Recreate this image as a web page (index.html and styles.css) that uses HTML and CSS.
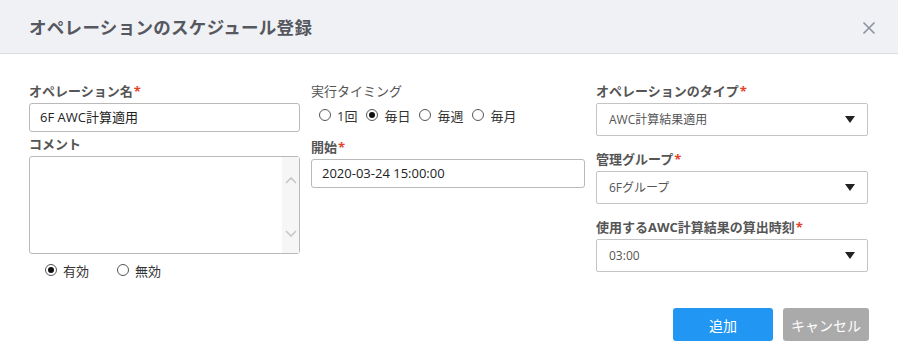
FILE: index.html
```html
<!DOCTYPE html>
<html lang="ja">
<head>
    <meta charset="UTF-8">
    <title>オペレーションのスケジュール登録</title>
    <link rel="stylesheet" href="styles.css">
</head>
<body>
<div class="dialog">
    <div class="dialog-header">
        <h2>オペレーションのスケジュール登録</h2>
        <span class="close">
            <svg width="14" height="14" viewBox="0 0 14 14"><path d="M1.5 1.5 L12.5 12.5 M12.5 1.5 L1.5 12.5" stroke="#8c90a0" stroke-width="1.6" fill="none"/></svg>
        </span>
    </div>
    <div class="dialog-body">
        <div class="col">
            <label class="field-label">オペレーション名<span class="req">*</span></label>
            <div class="input">6F AWC計算適用</div>
            <label class="field-label second">コメント</label>
            <div class="textarea">
                <div class="scroll">
                    <svg width="12" height="8" viewBox="0 0 12 8"><path d="M1 7 L6 2 L11 7" stroke="#c8c8c8" stroke-width="1.6" fill="none"/></svg>
                    <svg width="12" height="8" viewBox="0 0 12 8"><path d="M1 1 L6 6 L11 1" stroke="#c8c8c8" stroke-width="1.6" fill="none"/></svg>
                </div>
            </div>
            <div class="radios status">
                <span class="radio checked"></span><span class="radio-text">有効</span>
                <span class="radio gap"></span><span class="radio-text">無効</span>
            </div>
        </div>
        <div class="col">
            <label class="field-label plain">実行タイミング</label>
            <div class="radios timing">
                <span class="radio"></span><span class="radio-text">1回</span>
                <span class="radio checked"></span><span class="radio-text">毎日</span>
                <span class="radio"></span><span class="radio-text">毎週</span>
                <span class="radio"></span><span class="radio-text">毎月</span>
            </div>
            <label class="field-label start">開始<span class="req">*</span></label>
            <div class="input">2020-03-24 15:00:00</div>
        </div>
        <div class="col">
            <label class="field-label">オペレーションのタイプ<span class="req">*</span></label>
            <div class="select">AWC計算結果適用<span class="arrow"></span></div>
            <label class="field-label sel">管理グループ<span class="req">*</span></label>
            <div class="select">6Fグループ<span class="arrow"></span></div>
            <label class="field-label sel">使用するAWC計算結果の算出時刻<span class="req">*</span></label>
            <div class="select">03:00<span class="arrow"></span></div>
        </div>
    </div>
    <div class="dialog-footer">
        <button class="btn btn-primary">追加</button>
        <button class="btn btn-cancel">キャンセル</button>
    </div>
</div>
</body>
</html>
```

FILE: styles.css
```css
body { margin: 0; font-family: "Open Sans", "Noto Sans CJK JP", sans-serif; background: #fff; color: #333; }
.dialog { width: 898px; height: 363px; background: #fff; }
.dialog-header {
    height: 53px;
    background: #f0f1f5;
    border-bottom: 1px solid #dcdde2;
    display: flex;
    align-items: center;
    justify-content: space-between;
    padding: 0 22px 0 29px;
}
.dialog-header h2 { margin: 0; font-size: 17.5px; font-weight: bold; color: #55585f; letter-spacing: 0.3px; }
.close { display: flex; padding-top: 3px; }
.dialog-body {
    display: grid;
    grid-template-columns: 271px 274px 272px;
    column-gap: 11px;
    padding: 28px 30px 0 29px;
}
.col { display: flex; flex-direction: column; }
.field-label { font-size: 13px; font-weight: bold; color: #555; line-height: 18px; height: 18px; }
.field-label.plain { font-weight: normal; }
.req { color: #e0442a; margin-left: 1px; }
.field-label.second { margin-top: 3px; }
.field-label.start { margin-top: 14px; }
.field-label.sel { margin-top: 14px; }
.input {
    margin-top: 3px;
    height: 27px;
    border: 1px solid #b9b9b9;
    border-radius: 3px;
    font-size: 13px;
    line-height: 27px;
    padding: 0 10px;
    color: #222;
}
.textarea {
    margin-top: 3px;
    height: 96px;
    border: 1px solid #b9b9b9;
    border-radius: 3px;
    display: flex;
    justify-content: flex-end;
}
.scroll {
    width: 17px;
    background: #f6f6f6;
    display: flex;
    flex-direction: column;
    justify-content: space-between;
    align-items: center;
    padding: 19px 0 15px;
}
.radios { display: flex; align-items: center; font-size: 13px; color: #333; }
.radio {
    width: 10px;
    height: 10px;
    border: 1px solid #555;
    border-radius: 50%;
    position: relative;
    margin-right: 6px;
}
.radio.checked::after {
    content: "";
    position: absolute;
    left: 2px;
    top: 2px;
    width: 6px;
    height: 6px;
    border-radius: 50%;
    background: #111;
}
.radio-text { margin-right: 9px; }
.timing { margin-top: 6px; padding-left: 8px; height: 18px; }
.status { margin-top: 7px; padding-left: 16px; height: 18px; }
.status .gap { margin-left: 19px; }
.select {
    margin-top: 3px;
    height: 31px;
    border: 1px solid #c4c4c4;
    border-radius: 2px;
    font-size: 12px;
    line-height: 31px;
    padding: 0 12px;
    color: #555;
    display: flex;
    justify-content: space-between;
    align-items: center;
}
.arrow {
    width: 0;
    height: 0;
    border-left: 5px solid transparent;
    border-right: 5px solid transparent;
    border-top: 7px solid #222;
}
.dialog-footer {
    display: flex;
    justify-content: flex-end;
    gap: 10px;
    padding: 0 29px 0 0;
    margin-top: 29px;
}
.btn {
    height: 33px;
    border: none;
    border-radius: 3px;
    color: #fff;
    font-family: "Open Sans", "Noto Sans CJK JP", sans-serif;
    font-size: 14px;
    cursor: pointer;
}
.btn-primary { width: 100px; background: #2196f3; }
.btn-cancel { width: 86px; background: #aaaaaa; }
```
